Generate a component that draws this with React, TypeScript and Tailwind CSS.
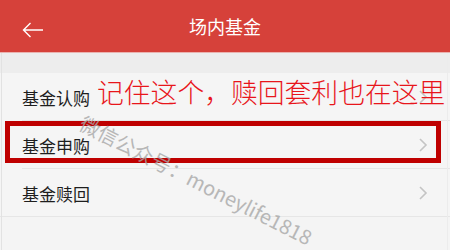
import React from "react";

const font = { fontFamily: '"Noto Sans CJK SC", "Noto Sans", sans-serif' };

function Chevron() {
  return (
    <svg width="10" height="16" viewBox="0 0 10 16" className="shrink-0">
      <path d="M2 2 L8 8 L2 14" fill="none" stroke="#c4c4c4" strokeWidth="1.6" />
    </svg>
  );
}

function Row({ label, sep }: { label: string; sep?: "inset" | "full" }) {
  return (
    <div className="relative flex h-[48px] items-center justify-between pl-[22px] pr-[22px]">
      <span className="text-[17px] leading-none text-[#1e1e1e]">{label}</span>
      <Chevron />
      {sep === "inset" && <div className="absolute bottom-0 left-[22px] right-0 h-px bg-[#e6e6e6]" />}
      {sep === "full" && <div className="absolute bottom-0 left-0 right-0 h-px bg-[#e6e6e6]" />}
    </div>
  );
}

export default function App() {
  return (
    <div className="relative h-[250px] w-[450px] overflow-hidden bg-[#f4f4f4]" style={font}>
      <div className="relative flex h-[52px] items-center justify-center bg-[#d6413a]">
        <svg width="22" height="16" viewBox="0 0 22 16" className="absolute left-[22px] top-[22px]">
          <path d="M21 8 H1.5 M8.5 1 L1.5 8 L8.5 15" fill="none" stroke="#fff" strokeWidth="1.4" />
        </svg>
        <span className="text-[18px] leading-none text-white">场内基金</span>
      </div>
      <div className="h-px bg-[#eab3b0]" />
      <div className="h-[20px] bg-[#ededed]" />
      <div className="bg-[#f5f5f5]">
        <Row label="基金认购" sep="inset" />
        <Row label="基金申购" sep="inset" />
        <Row label="基金赎回" sep="full" />
      </div>
      <div className="absolute left-px top-[53px] bottom-0 w-px bg-[#e2e2e2]" />
      <div className="absolute right-[2px] top-[53px] bottom-0 w-px bg-[#ececec]" />

      <div className="absolute left-[97px] top-[79px] whitespace-nowrap text-[26.8px] font-light leading-none text-[#e8151b]">
        记住这个，赎回套利也在这里
      </div>

      <div className="absolute left-[5px] top-[121px] h-[42px] w-[436px] border-[5px] border-[#bf0000]" />

      <div
        className="absolute left-[86px] top-[113px] whitespace-nowrap text-[20px] leading-none text-[#a8a8a8] opacity-80"
        style={{ transform: "rotate(27deg)", transformOrigin: "left top" }}
      >
        微信公众号：moneylife1818
      </div>
    </div>
  );
}
